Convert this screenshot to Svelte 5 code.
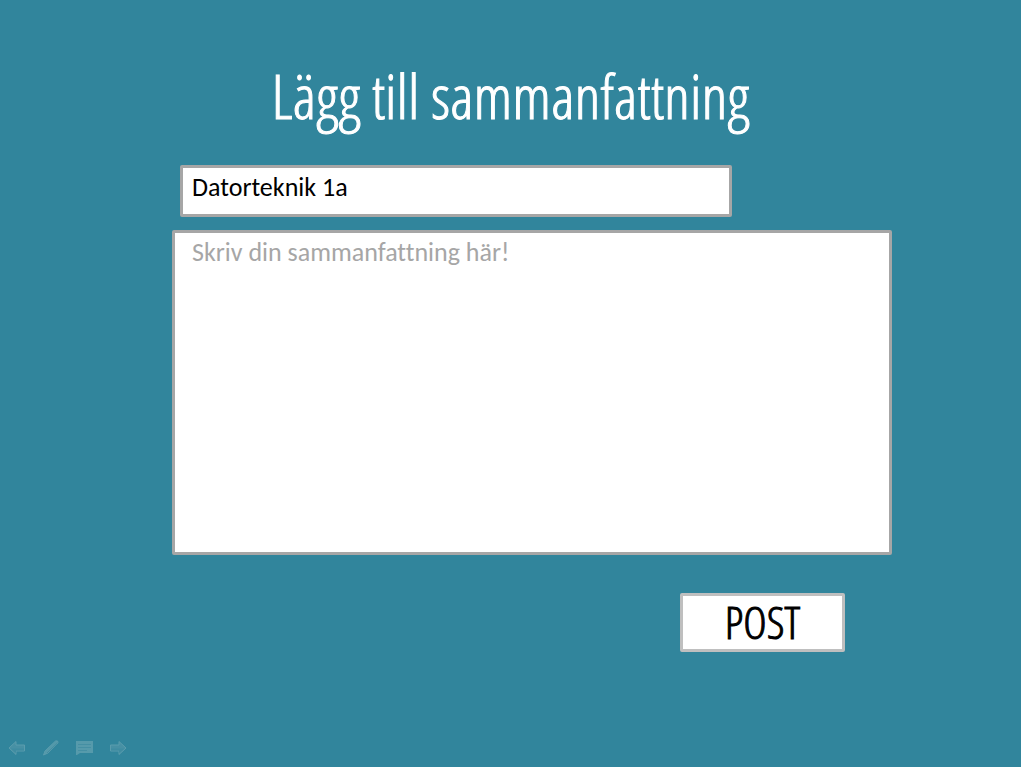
<script>
  let title = $state('Datorteknik 1a');
  let summary = $state('');
</script>

<main>
  <h1>Lägg till sammanfattning</h1>

  <form onsubmit={(event) => event.preventDefault()}>
    <input class="field title" type="text" aria-label="Titel" bind:value={title} />
    <textarea class="field" aria-label="Sammanfattning" placeholder="Skriv din sammanfattning här!" bind:value={summary}></textarea>
    <button class="post" type="submit">POST</button>
  </form>

  <nav aria-label="Bildspel">
    <button type="button" aria-label="Föregående">
      <svg width="18" height="18" viewBox="0 0 18 18">
        <path d="M1 9 8 2.500V6H16.500V12H8V15.500Z" fill="#4790a4" stroke="#5a9cad" />
        <path d="M3 9.500 8 14V11.500H16V9.500Z" fill="#3f8ca1" />
      </svg>
    </button>
    <button type="button" aria-label="Penna">
      <svg width="18" height="18" viewBox="0 0 18 18">
        <path d="M1.500 16 3 12 13.500 2Q16.500 1 16 4L6 14Z" fill="#5499aa" stroke="#5a9cad" />
        <path d="M5 14 15.500 4" fill="none" stroke="#418ca0" />
      </svg>
    </button>
    <button type="button" aria-label="Meny">
      <svg width="18" height="18" viewBox="0 0 18 18">
        <path d="M0 2H17V14H4L1 16H0Z" fill="#569aab" />
        <path d="M2 5.500H15M2 8.500H15M2 11.500H11" stroke="#458fa3" />
      </svg>
    </button>
    <button type="button" aria-label="Nästa">
      <svg width="18" height="18" viewBox="0 0 18 18">
        <path d="M16 9 9 2.500V6H.5V12H9V15.500Z" fill="#4790a4" stroke="#5a9cad" />
        <path d="M14.500 9.500 9 14V11.500H1V9.500Z" fill="#3f8ca1" />
      </svg>
    </button>
  </nav>
</main>

<style>
  :global(body) {
    margin: 0;
    background: #31859c;
  }

  main {
    box-sizing: border-box;
    min-height: 100vh;
    display: flex;
    flex-direction: column;
    padding: 60px 8px 10px;
    font-family: Carlito, Lato, sans-serif;
  }

  h1 {
    margin: 0 0 33px;
    color: #fff;
    font: 300 61px/72px "Open Sans Condensed Light", "Roboto Condensed", Roboto, sans-serif;
    text-align: center;
    -webkit-text-stroke: 1px currentColor;
  }

  form {
    display: flex;
    flex-direction: column;
    gap: 13px;
    margin: 0 121px 0 164px;
  }

  .field {
    box-sizing: border-box;
    width: 100%;
    margin: 0;
    border: 3px solid #a6a6a6;
    border-radius: 2px;
    background: #fff;
    color: #000;
    font: 400 26px/30px Carlito, Lato, sans-serif;
    font-variant-ligatures: none;
    outline: none;
  }

  .title {
    width: calc(77% - 2px);
    height: 52px;
    margin-left: 8px;
    padding: 4px 9px 12px;
  }

  textarea {
    display: block;
    height: 325px;
    padding: 4px 17px;
    resize: none;
  }

  textarea::placeholder {
    color: #a6a6a6;
    opacity: 1;
  }

  .post {
    align-self: flex-end;
    width: 165px;
    margin: 25px 47px 0 0;
    padding: 0 0 2px;
    border: 3px solid #bfbfbf;
    border-radius: 2px;
    background: #fff;
    color: #000;
    font: 300 45px/51px "Open Sans Condensed Light", "Roboto Condensed", Roboto, sans-serif;
    -webkit-text-stroke: 1px currentColor;
  }

  nav {
    display: flex;
    gap: 16px;
    margin-top: auto;
  }

  nav button {
    display: flex;
    padding: 0;
    border: 0;
    background: none;
  }
</style>
